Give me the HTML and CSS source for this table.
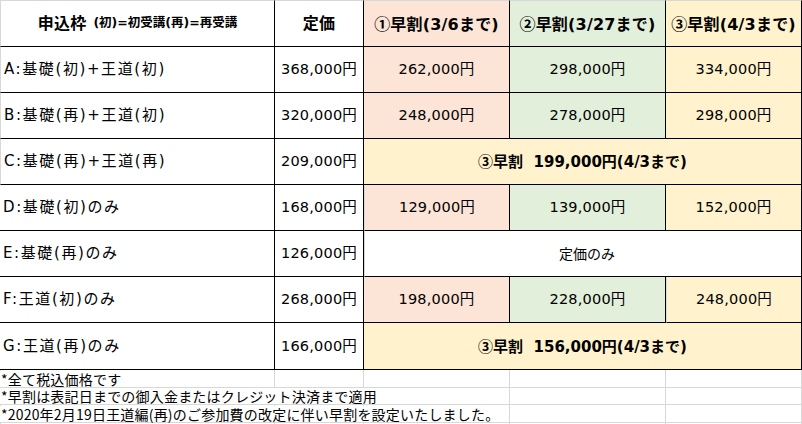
FILE: index.html
```html
<!DOCTYPE html>
<html lang="ja">
<head>
<meta charset="utf-8">
<link rel="stylesheet" href="styles.css">
</head>
<body>
<div class="sheet">
  <div class="c hd first"><span class="big">申込枠</span><span class="small">(初)=初受講(再)=再受講</span></div>
  <div class="c hd"><span class="big">定価</span></div>
  <div class="c hd peach"><span class="big"><span class="cj">①</span>早割(3/6まで)</span></div>
  <div class="c hd green"><span class="big"><span class="cj">②</span>早割(3/27まで)</span></div>
  <div class="c hd yellow"><span class="big"><span class="cj">③</span>早割(4/3まで)</span></div>

  <div class="c lbl">A:基礎(初)+王道(初)</div>
  <div class="c num">368,000円</div>
  <div class="c num peach">262,000円</div>
  <div class="c num green">298,000円</div>
  <div class="c num yellow">334,000円</div>

  <div class="c lbl">B:基礎(再)+王道(初)</div>
  <div class="c num">320,000円</div>
  <div class="c num peach">248,000円</div>
  <div class="c num green">278,000円</div>
  <div class="c num yellow">298,000円</div>

  <div class="c lbl">C:基礎(再)+王道(再)</div>
  <div class="c num">209,000円</div>
  <div class="c merged yellow span3 bold"><span><span class="cj">③</span>早割&nbsp;&nbsp;199,000円(4/3まで)</span></div>

  <div class="c lbl">D:基礎(初)のみ</div>
  <div class="c num">168,000円</div>
  <div class="c num peach">129,000円</div>
  <div class="c num green">139,000円</div>
  <div class="c num yellow">152,000円</div>

  <div class="c lbl">E:基礎(再)のみ</div>
  <div class="c num">126,000円</div>
  <div class="c merged span3">定価のみ</div>

  <div class="c lbl">F:王道(初)のみ</div>
  <div class="c num">268,000円</div>
  <div class="c num peach">198,000円</div>
  <div class="c num green">228,000円</div>
  <div class="c num yellow">248,000円</div>

  <div class="c lbl">G:王道(再)のみ</div>
  <div class="c num">166,000円</div>
  <div class="c merged yellow span3 bold"><span><span class="cj">③</span>早割&nbsp;&nbsp;156,000円(4/3まで)</span></div>

  <div class="note"><span>*全て税込価格です</span></div>
  <div class="note"><span>*早割は表記日までの御入金またはクレジット決済まで適用</span></div>
  <div class="note"><span>*2020年2月19日王道編(再)のご参加費の改定に伴い早割を設定いたしました。</span></div>
  <div class="note last"></div>
</div>
</body>
</html>
```

FILE: styles.css
```css
html, body {
  margin: 0;
  padding: 0;
  background: #ffffff;
}
.sheet {
  width: 802px;
  height: 424px;
  display: grid;
  grid-template-columns: 275px 89px 146px 156px 136px;
  grid-template-rows: 47px repeat(6, 46px) 47px 18px 17px 18px 1fr;
  font-family: "DejaVu Sans", "Noto Sans CJK JP", sans-serif;
  color: #000;
  overflow: hidden;
}
.cj {
  font-family: "Noto Sans CJK JP", sans-serif;
}
.c {
  box-sizing: border-box;
  border-right: 1px solid #000;
  border-bottom: 1px solid #000;
  display: flex;
  align-items: center;
  line-height: 1;
  white-space: nowrap;
}
.c:nth-child(5n+1) {
  border-left: 1px solid #d8d8d8;
}
.hd {
  justify-content: center;
  font-weight: bold;
  border-top: 1px solid #d8d8d8;
}
.hd .big {
  font-size: 16px;
  letter-spacing: 0.2px;
}
.hd .small {
  font-size: 12.5px;
  margin-left: 7px;
}
.lbl {
  padding-left: 3px;
  font-size: 15px;
  letter-spacing: 1.6px;
}
.num {
  justify-content: center;
  font-size: 14.5px;
  letter-spacing: 0.2px;
}
.merged {
  justify-content: center;
  font-size: 14px;
  padding-left: 8px;
}
.merged.bold {
  font-size: 15px;
  padding-left: 0;
}
.bold {
  font-weight: bold;
}
.span3 {
  grid-column: span 3;
}
.peach { background: #fce4d6; }
.green { background: #e2efda; }
.yellow { background: #fff2cc; }
.note {
  grid-column: 1 / -1;
  box-sizing: border-box;
  border-bottom: 1px solid #d8d8d8;
  background-image:
    linear-gradient(#d8d8d8, #d8d8d8),
    linear-gradient(#d8d8d8, #d8d8d8),
    linear-gradient(#d8d8d8, #d8d8d8),
    linear-gradient(#d8d8d8, #d8d8d8),
    linear-gradient(#d8d8d8, #d8d8d8),
    linear-gradient(#d8d8d8, #d8d8d8);
  background-size: 1px 100%;
  background-repeat: no-repeat;
  background-position: 0 0, 274px 0, 363px 0, 509px 0, 665px 0, 801px 0;
  display: flex;
  align-items: center;
  font-family: "Noto Sans CJK JP", sans-serif;
  font-size: 14px;
  letter-spacing: 0.2px;
  line-height: 16px;
  white-space: nowrap;
}
.note span {
  background: #ffffff;
  padding-left: 1px;
  padding-right: 2px;
  line-height: 16px;
}
.note.last {
  border-bottom: none;
}
```
